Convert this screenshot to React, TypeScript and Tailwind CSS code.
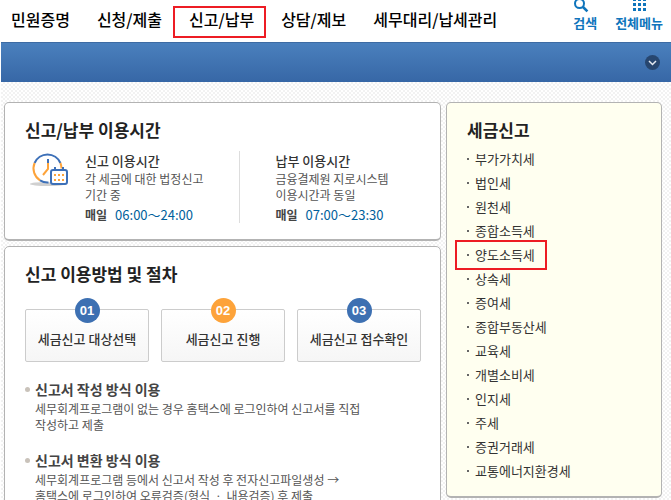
const menus = ['민원증명', '신청/제출', '신고/납부', '상담/제보', '세무대리/납세관리'];

const taxes = [
  '부가가치세',
  '법인세',
  '원천세',
  '종합소득세',
  '양도소득세',
  '상속세',
  '증여세',
  '종합부동산세',
  '교육세',
  '개별소비세',
  '인지세',
  '주세',
  '증권거래세',
  '교통에너지환경세',
];

const steps = [
  { no: '01', label: '세금신고 대상선택', color: 'bg-[#3d70b2]' },
  { no: '02', label: '세금신고 진행', color: 'bg-[#fda33a]' },
  { no: '03', label: '세금신고 접수확인', color: 'bg-[#3d70b2]' },
];

const methods = [
  {
    title: '신고서 작성 방식 이용',
    lines: ['세무회계프로그램이 없는 경우 홈택스에 로그인하여 신고서를 직접', '작성하고 제출'],
  },
  {
    title: '신고서 변환 방식 이용',
    lines: [
      '세무회계프로그램 등에서 신고서 작성 후 전자신고파일생성 →',
      '홈택스에 로그인하여 오류검증(형식 ㆍ 내용검증) 후 제출',
    ],
  },
];

function SearchIcon() {
  return (
    <svg width="16" height="16" viewBox="0 0 16 16" fill="none" stroke="#0f75bc" aria-hidden="true">
      <circle cx="6.5" cy="6.5" r="4.5" strokeWidth="2" />
      <path d="M10 10l4.4 4.4" strokeWidth="2.6" />
    </svg>
  );
}

function GridIcon() {
  return (
    <svg width="13" height="13" viewBox="0 0 13 13" fill="#0f75bc" aria-hidden="true">
      {[0, 5, 10].map(y => [0, 5, 10].map(x => <rect key={`${x}-${y}`} x={x} y={y} width="3" height="3" />))}
    </svg>
  );
}

function ClockIcon() {
  return (
    <svg className="shrink-0" width="40" height="36" viewBox="0 0 40 36" fill="none" aria-hidden="true">
      <ellipse cx="18" cy="33" rx="18" ry="2" fill="#d0d0d0" />
      <circle cx="17.5" cy="17.5" r="14" fill="#fff" />
      <path d="M4.6 12A14 14 0 0 1 30.4 12" stroke="#3d70b8" strokeWidth="2" />
      <path d="M30.4 12A14 14 0 0 1 31.5 17.5" stroke="#fda33a" strokeWidth="2" />
      <path d="M4.6 12A14 14 0 0 0 10 29.3" stroke="#fda33a" strokeWidth="2" />
      <path d="M10 29.3A14 14 0 0 0 18.5 31.5" stroke="#3d70b8" strokeWidth="2" />
      <path d="M18 8v4" stroke="#3d70b8" strokeWidth="2" />
      <path d="M18 12v6l-5 6" stroke="#fda33a" strokeWidth="2" />
      <rect x="21" y="19" width="16" height="14" rx="2" fill="#fff" stroke="#3d70b8" strokeWidth="2" />
      <path d="M25 16v3M33 16v3" stroke="#3d70b8" strokeWidth="2" />
      {[23, 28].map(y =>
        [24, 28, 32].map(x => <rect key={`${x}-${y}`} x={x} y={y} width="2" height="2" fill="#fda33a" />)
      )}
    </svg>
  );
}

type HoursProps = { title: string; lines: string[]; time: string };

function Hours({ title, lines, time }: HoursProps) {
  return (
    <div className="whitespace-nowrap text-[#555]">
      <h3 className="text-[13px] leading-5 font-medium text-[#333]">{title}</h3>
      {lines.map(line => (
        <p key={line} className="text-xs leading-4">
          {line}
        </p>
      ))}
      <p className="mt-1 flex gap-2 text-[13px] leading-4">
        <span className="text-xs leading-4 font-bold text-[#444]">매일</span>
        <span className="text-[#00609c]">{time}</span>
      </p>
    </div>
  );
}

export default function App() {
  return (
    <div className="h-screen overflow-hidden bg-white pl-px font-['Noto_Sans_CJK_KR','Noto_Sans',sans-serif]">
      <header className="flex h-[42px] items-end justify-between overflow-hidden pr-2 pl-[10px] whitespace-nowrap">
        <nav className="flex gap-[27px] pb-[11px] text-base leading-6 font-medium text-black">
          {menus.map(menu => (
            <a key={menu} href="#" className="relative">
              {menu}
              {menu === '신고/납부' && (
                <span className="absolute -top-[1px] right-[-12px] -bottom-[7px] left-[-16px] border-2 border-[#ed1c24]" />
              )}
            </a>
          ))}
        </nav>
        <div className="flex gap-[18px] pb-[9px] text-[13px] leading-5 font-bold text-[#0f75bc]">
          <button type="button" className="flex flex-col items-start">
            <SearchIcon />
            검색
          </button>
          <button type="button" className="flex flex-col items-center justify-end gap-[2px]">
            <GridIcon />
            전체메뉴
          </button>
        </div>
      </header>

      <div className="flex h-10 items-center justify-end border-t border-[#3d6ba3] bg-linear-to-b from-[#4a80bd] to-[#3767a6] pr-[11px]">
        <button
          type="button"
          aria-label="메뉴 펼치기"
          className="flex size-[15px] items-center justify-center rounded-full bg-[#27466f]"
        >
          <svg width="9" height="6" viewBox="0 0 9 6" fill="none" stroke="#e4e9f0" strokeWidth="1.5" aria-hidden="true">
            <path d="M1 1l3.5 3.5L8 1" />
          </svg>
        </button>
      </div>

      <main className="flex min-h-screen items-start gap-[5px] bg-[repeating-conic-gradient(#f2f2f2_0_25%,#fff_0_50%)] bg-size-[4px_4px] pt-5 pr-[9px] pl-[3px]">
        <div className="flex min-w-0 flex-1 flex-col gap-[5px]">
          <section className="rounded-[5px] border border-b-2 border-[#b3b3b3] bg-white px-5 pt-[15px] pb-4">
            <h2 className="text-[17px] leading-6 font-bold text-[#222]">신고/납부 이용시간</h2>
            <div className="mt-[9px] grid grid-cols-[6fr_5fr]">
              <div className="flex gap-[15px] border-r border-[#ddd] pl-[5px]">
                <ClockIcon />
                <Hours title="신고 이용시간" lines={['각 세금에 대한 법정신고', '기간 중']} time="06:00～24:00" />
              </div>
              <div className="pl-[35px]">
                <Hours title="납부 이용시간" lines={['금융결제원 지로시스템', '이용시간과 동일']} time="07:00～23:30" />
              </div>
            </div>
          </section>

          <section className="rounded-t-[5px] border border-[#b3b3b3] bg-white pt-[15px] pr-[19px] pb-5 pl-5">
            <h2 className="text-[17px] leading-6 font-bold text-[#222]">신고 이용방법 및 절차</h2>
            <ol className="mt-[23px] flex gap-3">
              {steps.map(step => (
                <li
                  key={step.no}
                  className="relative flex h-[53px] flex-1 items-center justify-center rounded-xs border border-[#ccc] bg-linear-to-b from-white to-[#f6f6f6] pt-[6px] text-[13px] font-medium whitespace-nowrap text-[#333]"
                >
                  <span
                    className={`absolute -top-3 flex size-[25px] items-center justify-center rounded-full font-['Liberation_Sans',sans-serif] text-[13px] font-bold text-white ${step.color}`}
                  >
                    {step.no}
                  </span>
                  {step.label}
                </li>
              ))}
            </ol>
            <ul className="mt-[17px] flex flex-col gap-[17px]">
              {methods.map(method => (
                <li key={method.title} className="flex gap-[5px]">
                  <span className="mt-2 size-[5px] shrink-0 rounded-full bg-[#c9c2ba]" />
                  <div className="whitespace-nowrap">
                    <h3 className="text-sm leading-5 font-bold text-[#444]">{method.title}</h3>
                    <div className="mt-[2px] text-xs leading-4 text-[#555]">
                      {method.lines.map(line => (
                        <p key={line}>{line}</p>
                      ))}
                    </div>
                  </div>
                </li>
              ))}
            </ul>
          </section>
        </div>

        <aside className="w-54 rounded-[5px] border border-b-2 border-[#b3b3b3] bg-[#fffff0] px-5 pt-[15px] pb-[13px]">
          <h2 className="text-[17px] leading-6 font-bold text-[#222]">세금신고</h2>
          <ul className="mt-[5px] text-[13px] leading-6 text-[#333]">
            {taxes.map(tax => (
              <li key={tax} className="flex">
                <a href="#" className="relative flex items-center gap-[6px]">
                  <span className="size-[2px] bg-[#666]" />
                  {tax}
                  {tax === '양도소득세' && (
                    <span className="absolute -inset-x-3 -inset-y-[3px] border-2 border-[#ed1c24]" />
                  )}
                </a>
              </li>
            ))}
          </ul>
        </aside>
      </main>
    </div>
  );
}
